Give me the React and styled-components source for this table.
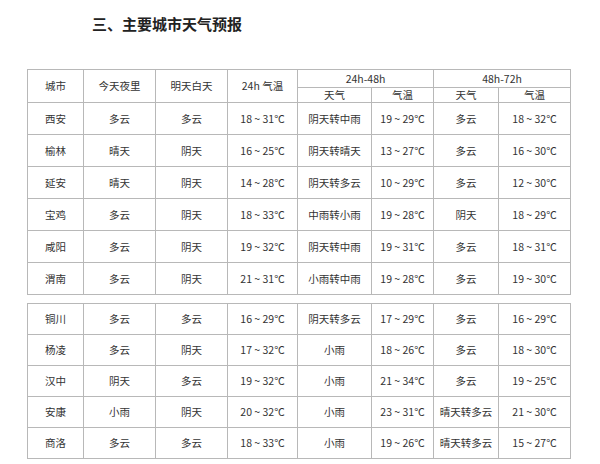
import React from 'react';
import styled, { createGlobalStyle } from 'styled-components';

const GlobalStyle = createGlobalStyle`
  html, body {
    margin: 0;
    padding: 0;
    background: #fff;
  }
  body {
    font-family: "Noto Sans CJK SC", "Noto Sans", sans-serif;
    color: #333;
  }
`;

const Page = styled.div`
  width: 600px;
  height: 464px;
  overflow: hidden;
  padding: 14px 0 0 27px;
  box-sizing: border-box;
`;

const Title = styled.h2`
  margin: 0 0 0 65px;
  font-size: 15px;
  line-height: 20px;
  font-weight: 700;
  color: #222;
`;

const Table = styled.table`
  width: 543px;
  table-layout: fixed;
  border-collapse: collapse;
  margin-top: ${(p) => p.$gap}px;
  font-size: 10.5px;
  color: #333;
`;

const Cell = styled.td`
  border: 1px solid #b8b8b8;
  padding: 0;
  text-align: center;
  vertical-align: middle;
  white-space: nowrap;
  line-height: 14px;
`;

const Row = styled.tr`
  height: ${(p) => p.$h}px;
`;

const widths = [56, 72, 72, 70, 74, 62, 65, 72];

const group1 = [
  ['西安', '多云', '多云', '18 ~ 31℃', '阴天转中雨', '19 ~ 29℃', '多云', '18 ~ 32℃'],
  ['榆林', '晴天', '阴天', '16 ~ 25℃', '阴天转晴天', '13 ~ 27℃', '多云', '16 ~ 30℃'],
  ['延安', '晴天', '阴天', '14 ~ 28℃', '阴天转多云', '10 ~ 29℃', '多云', '12 ~ 30℃'],
  ['宝鸡', '多云', '阴天', '18 ~ 33℃', '中雨转小雨', '19 ~ 28℃', '阴天', '18 ~ 29℃'],
  ['咸阳', '多云', '阴天', '19 ~ 32℃', '阴天转中雨', '19 ~ 31℃', '多云', '18 ~ 31℃'],
  ['渭南', '多云', '阴天', '21 ~ 31℃', '小雨转中雨', '19 ~ 28℃', '多云', '19 ~ 30℃'],
];

const group2 = [
  ['铜川', '多云', '多云', '16 ~ 29℃', '阴天转多云', '17 ~ 29℃', '多云', '16 ~ 29℃'],
  ['杨凌', '多云', '阴天', '17 ~ 32℃', '小雨', '18 ~ 26℃', '多云', '18 ~ 30℃'],
  ['汉中', '阴天', '多云', '19 ~ 32℃', '小雨', '21 ~ 34℃', '多云', '19 ~ 25℃'],
  ['安康', '小雨', '阴天', '20 ~ 32℃', '小雨', '23 ~ 31℃', '晴天转多云', '21 ~ 30℃'],
  ['商洛', '多云', '多云', '18 ~ 33℃', '小雨', '19 ~ 26℃', '晴天转多云', '15 ~ 27℃'],
];

function Cols() {
  return (
    <colgroup>
      {widths.map((w, i) => (
        <col key={i} style={{ width: w }} />
      ))}
    </colgroup>
  );
}

function DataRows({ rows, h }) {
  return rows.map((r) => (
    <Row key={r[0]} $h={h}>
      {r.map((c, i) => (
        <Cell key={i}>{c}</Cell>
      ))}
    </Row>
  ));
}

export default function App() {
  return (
    <>
      <GlobalStyle />
      <Page>
        <Title>三、主要城市天气预报</Title>
        <Table $gap={35}>
          <Cols />
          <tbody>
            <Row $h={18}>
              <Cell rowSpan={2}>城市</Cell>
              <Cell rowSpan={2}>今天夜里</Cell>
              <Cell rowSpan={2}>明天白天</Cell>
              <Cell rowSpan={2}>24h 气温</Cell>
              <Cell colSpan={2}>24h-48h</Cell>
              <Cell colSpan={2}>48h-72h</Cell>
            </Row>
            <Row $h={15}>
              <Cell>天气</Cell>
              <Cell>气温</Cell>
              <Cell>天气</Cell>
              <Cell>气温</Cell>
            </Row>
            <DataRows rows={group1} h={32} />
          </tbody>
        </Table>
        <Table $gap={8}>
          <Cols />
          <tbody>
            <DataRows rows={group2} h={31} />
          </tbody>
        </Table>
      </Page>
    </>
  );
}
